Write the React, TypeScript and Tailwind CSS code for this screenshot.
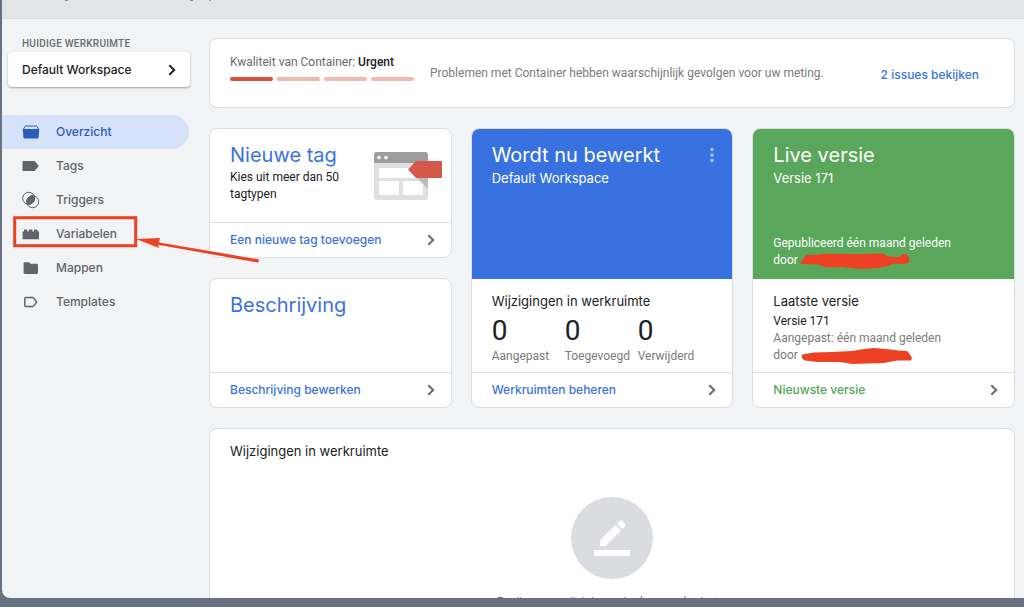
import type { ReactNode } from "react";

const display = "font-['Inter',sans-serif]";

function Chevron({ className = "text-[#6b6b6b]" }: { className?: string }) {
  return (
    <svg viewBox="0 0 8 12" className={`h-3 w-2 shrink-0 ${className}`} fill="none" stroke="currentColor" strokeWidth="2" aria-hidden="true">
      <path d="M1.3 1.2 6.2 6 1.3 10.8" />
    </svg>
  );
}

const icons: Record<string, ReactNode> = {
  overview: (
    <svg viewBox="0 0 18 14" className="h-3.5 w-[18px]" aria-hidden="true">
      <path d="M1.6 4 3 1.4Q3.3 1 3.8 1H14.2Q14.7 1 15 1.4L16.4 4" fill="none" stroke="currentColor" strokeWidth="1" />
      <path d="M1.2 4H16.8Q17.3 4 17.2 4.6L16.6 12.2Q16.5 13.5 15.4 13.5H2.6Q1.5 13.5 1.4 12.2L.8 4.6Q.7 4 1.2 4Z" fill="currentColor" />
    </svg>
  ),
  tag: (
    <svg viewBox="0 0 18 14" className="h-3.5 w-[18px]" aria-hidden="true">
      <path d="M1.5 2H12Q12.7 2 13.1 2.5L16.8 7 13.1 11.5Q12.7 12 12 12H1.5Q.5 12 .5 11V3Q.5 2 1.5 2Z" fill="currentColor" />
    </svg>
  ),
  trigger: (
    <svg viewBox="0 0 18 18" className="h-[18px] w-[18px]" fill="none" stroke="currentColor" strokeWidth="1" aria-hidden="true">
      <circle cx="6.7" cy="7.3" r="6" />
      <circle cx="10.7" cy="10.7" r="6" />
      <path d="M12.2 4.9A6 6 0 0 1 5.2 13.1 6 6 0 0 1 12.2 4.9Z" fill="currentColor" />
    </svg>
  ),
  variable: (
    <svg viewBox="0 0 18 14" className="h-3.5 w-[18px]" aria-hidden="true">
      <path d="M.6 12.3V4.6H2V3.3Q2 2.5 2.8 2.5H4.4Q5.2 2.5 5.2 3.3V4.6H6.7V3.3Q6.7 2.5 7.5 2.5H9.6Q10.4 2.5 10.4 3.3V4.6H12V3.3Q12 2.5 12.8 2.5H14.7Q15.5 2.5 15.5 3.3V4.6H17V12.3Z" fill="currentColor" />
    </svg>
  ),
  folder: (
    <svg viewBox="0 0 18 14" className="h-3.5 w-[18px]" aria-hidden="true">
      <path d="M3 1.2H7L8.6 2.8H14.6Q16 2.8 16 4.2V11.6Q16 13 14.6 13H3Q1.6 13 1.6 11.6V2.6Q1.6 1.2 3 1.2Z" fill="currentColor" />
    </svg>
  ),
  template: (
    <svg viewBox="0 0 18 14" className="h-3.5 w-[18px]" fill="none" stroke="currentColor" strokeWidth="1.5" strokeLinejoin="round" aria-hidden="true">
      <path d="M3.6 2.6H10.8Q11.4 2.6 11.8 3.1L14.6 7 11.8 10.9Q11.4 11.4 10.8 11.4H3.6Q2.8 11.4 2.8 10.6V3.4Q2.8 2.6 3.6 2.6Z" />
    </svg>
  ),
};

const navItems = [
  { icon: "overview", label: "Overzicht", active: true },
  { icon: "tag", label: "Tags" },
  { icon: "trigger", label: "Triggers" },
  { icon: "variable", label: "Variabelen", marked: true },
  { icon: "folder", label: "Mappen" },
  { icon: "template", label: "Templates" },
];

function Annotation() {
  return (
    <svg viewBox="0 0 250 50" className="pointer-events-none absolute -top-px left-2.5 z-10 h-[50px] w-[250px]" aria-hidden="true">
      <rect x="2.7" y="1.700" width="121" height="28" fill="none" stroke="#ee4023" strokeWidth="3" />
      <path d="M124 23 148 22 147 26.500 246.500 43.300Q247.500 45.500 246 46.500L146 28.800 147 32Z" fill="#ee4023" />
    </svg>
  );
}

function Sidebar() {
  return (
    <aside className="w-[207px] shrink-0 pt-[17px]">
      <p className="pl-5 text-[10px] leading-4 font-medium tracking-wide text-[#6a6d71]">HUIDIGE WERKRUIMTE</p>
      <button className={`ml-1.5 flex h-[35px] w-[182px] items-center justify-between rounded bg-white pr-3.5 pl-3.5 text-xs font-medium text-[#202124] shadow-[0_1px_2px_rgba(0,0,0,0.35)] ${display}`}>
        Default Workspace
        <Chevron className="text-[#202124]" />
      </button>
      <nav className="mt-7">
        <ul>
          {navItems.map((item) => (
            <li key={item.label} className="relative">
              <a
                href="#"
                className={`flex h-[34px] w-[187px] items-center rounded-r-full pl-5 text-xs font-medium ${display} ${item.active ? "bg-[#d6e2fa] text-[#2b5bbd]" : "text-[#606368]"}`}
              >
                <span className="flex w-[34px] items-center">{icons[item.icon]}</span>
                {item.label}
              </a>
              {item.marked && <Annotation />}
            </li>
          ))}
        </ul>
      </nav>
    </aside>
  );
}

function Card({ children, className = "" }: { children: ReactNode; className?: string }) {
  return <section className={`flex flex-col overflow-hidden rounded-lg border border-[#dadde2] bg-white ${className}`}>{children}</section>;
}

function CardLink({ children, green = false }: { children: ReactNode; green?: boolean }) {
  return (
    <a href="#" className={`flex h-[35px] shrink-0 items-center justify-between border-t border-[#dadde2] pr-4 pl-5 text-xs font-medium ${display} ${green ? "text-[#55a558]" : "text-[#3b73e0]"}`}>
      {children}
      <Chevron />
    </a>
  );
}

function TagArt() {
  return (
    <svg viewBox="0 0 70 50" className="mt-[22px] h-[50px] w-[70px] shrink-0" aria-hidden="true">
      <rect x="1" y="1" width="54" height="48" rx="3" fill="#dfdfdf" />
      <path d="M4 1H52Q55 1 55 4V12H1V4Q1 1 4 1Z" fill="#9c9c9c" />
      <circle cx="6" cy="6.6" r="1.8" fill="#fff" />
      <circle cx="13" cy="6.6" r="1.8" fill="#fff" />
      <path d="M6 17H50V27H6ZM6 30H26V44H6ZM30 30H50V44H30Z" fill="#fff" />
      <path d="M39 22 55 38V26Z" fill="#bcbcbc" />
      <path d="M35 18.5 42.5 10.5Q43 10 44 10H68Q69 10 69 11V26Q69 27 68 27H44Q43 27 42.5 26.5Z" fill="#d6584a" />
    </svg>
  );
}

function Stat({ label }: { label: string }) {
  return (
    <div className="w-[73px] whitespace-nowrap">
      <p className="text-[28px] leading-8 text-[#202124]">0</p>
      <p className="text-xs leading-[18px] text-[#7b7b7b]">{label}</p>
    </div>
  );
}

function Quality() {
  return (
    <Card className="shrink-0">
      <div className="flex items-center py-3.5 pr-[35px] pl-5">
        <div className="w-[184px] shrink-0 pb-3">
          <p className="text-xs leading-[18px] whitespace-nowrap text-[#6a6a6a]">
            Kwaliteit van Container: <span className="font-medium text-[#202124]">Urgent</span>
          </p>
          <div className="mt-1.5 grid grid-cols-4 gap-1">
            <span className="h-1 rounded-full bg-[#da4f3f]" />
            <span className="h-1 rounded-full bg-[#f0b8af]" />
            <span className="h-1 rounded-full bg-[#f0b8af]" />
            <span className="h-1 rounded-full bg-[#f0b8af]" />
          </div>
        </div>
        <p className="ml-4 flex-1 text-xs leading-[18px] text-[#7b7b7b]">Problemen met Container hebben waarschijnlijk gevolgen voor uw meting.</p>
        <a href="#" className={`pt-1 text-xs font-medium whitespace-nowrap text-[#3b73e0] ${display}`}>2 issues bekijken</a>
      </div>
    </Card>
  );
}

export default function App() {
  return (
    <div className="h-screen overflow-hidden bg-[#687180] pb-[9px] pl-0.5 font-['Roboto',sans-serif]">
      <div className="flex h-full flex-col overflow-hidden rounded-bl-lg bg-[#f1f3f4]">
        <header className="h-[19px] shrink-0 border-b border-[#dadcde] bg-[#e3e4e5]">
          <svg viewBox="0 0 220 2" className="h-0.5 w-[220px]" aria-hidden="true">
            <path d="M63 .5H66M188 .5H191M207.500 .5H209" stroke="#8b8d90" />
          </svg>
        </header>
        <div className="flex min-h-0 flex-1">
          <Sidebar />
          <main className="flex min-w-0 flex-1 flex-col gap-5 pt-[19px] pr-[9px]">
            <Quality />
            <div className="grid shrink-0 grid-cols-[243fr_263fr_263fr] gap-[19px]">
              <div className="flex flex-col gap-5">
                <Card className="h-[130px]">
                  <div className="flex flex-1 justify-between pr-2 pl-5">
                    <div className="pt-3">
                      <h2 className={`text-xl leading-7 whitespace-nowrap text-[#3b73e0] ${display}`}>Nieuwe tag</h2>
                      <p className="w-[120px] text-xs leading-[17px] text-[#202124]">Kies uit meer dan 50 tagtypen</p>
                    </div>
                    <TagArt />
                  </div>
                  <CardLink>Een nieuwe tag toevoegen</CardLink>
                </Card>
                <Card className="h-[130px]">
                  <h2 className={`flex-1 pt-3 pl-5 text-xl leading-7 text-[#3b73e0] ${display}`}>Beschrijving</h2>
                  <CardLink>Beschrijving bewerken</CardLink>
                </Card>
              </div>
              <Card>
                <div className={`flex h-[150px] items-start justify-between bg-[#3872e0] pt-3 pr-4 pl-5 text-white ${display}`}>
                  <div>
                    <h2 className="text-xl leading-7">Wordt nu bewerkt</h2>
                    <p className="text-[13px] leading-[18px]">Default Workspace</p>
                  </div>
                  <button aria-label="Meer opties" className="mt-1.5">
                    <svg viewBox="0 0 8 16" className="h-4 w-2" fill="#a9c3f3" aria-hidden="true">
                      <circle cx="4" cy="2.500" r="1.8" />
                      <circle cx="4" cy="8" r="1.8" />
                      <circle cx="4" cy="13.500" r="1.8" />
                    </svg>
                  </button>
                </div>
                <div className="flex-1 pt-3 pl-5">
                  <h3 className={`text-[13px] leading-5 text-[#202124] ${display}`}>Wijzigingen in werkruimte</h3>
                  <div className="mt-1 flex">
                    <Stat label="Aangepast" />
                    <Stat label="Toegevoegd" />
                    <Stat label="Verwijderd" />
                  </div>
                </div>
                <CardLink>Werkruimten beheren</CardLink>
              </Card>
              <Card>
                <div className="flex h-[150px] flex-col bg-[#5aa75c] pt-3 pb-2.5 pl-5 text-white">
                  <h2 className={`text-xl leading-7 ${display}`}>Live versie</h2>
                  <p className={`text-[13px] leading-[18px] ${display}`}>Versie 171</p>
                  <div className="mt-auto text-xs leading-[17px]">
                    <p>Gepubliceerd één maand geleden</p>
                    <p className="flex items-center">
                      door
                      <svg viewBox="0 0 110 16" className="ml-0.5 h-4 w-[110px]" fill="#ee4023" aria-hidden="true">
                        <path d="M0 10 3 6 6 2 20 1.5 24 .8 60 1 83 .5 88 3.500 99 4 103 1 107 1.200 109.500 6 109 9.500 105 11 94 10.500 88 13 78 15 60 16 42 14 26 14.500 18 11.500 2 11Z" />
                      </svg>
                    </p>
                  </div>
                </div>
                <div className="flex-1 pt-3 pl-5">
                  <h3 className={`text-[13px] leading-5 text-[#202124] ${display}`}>Laatste versie</h3>
                  <div className="mt-0.5 text-xs leading-[17px] text-[#7b7b7b]">
                    <p className="text-[#202124]">Versie 171</p>
                    <p>Aangepast: één maand geleden</p>
                    <p className="flex items-center">
                      door
                      <svg viewBox="0 0 110 16" className="ml-1 h-4 w-[110px]" fill="#ee4023" aria-hidden="true">
                        <path d="M0 6.500 12 4.500 30 4 50 3 62 1 72 0 84 1 96 2.500 105 3 107 5 110 10 109 12.500 95 12.500 82 15 50 16 38 14 15 14 3 12.500 0 10.500Z" />
                      </svg>
                    </p>
                  </div>
                </div>
                <CardLink green>Nieuwste versie</CardLink>
              </Card>
            </div>
            <Card className="h-60 shrink-0">
              <h3 className={`pt-3 pl-5 text-[13px] leading-5 text-[#202124] ${display}`}>Wijzigingen in werkruimte</h3>
              <div className="mt-9 flex flex-col items-center">
                <svg viewBox="0 0 82 82" className="h-[82px] w-[82px]" aria-hidden="true">
                  <circle cx="41" cy="41" r="41" fill="#dadce0" />
                  <path d="M23 53H59V59H23ZM29 43.300 44.500 28 50 33.500 34.500 49H29ZM46 26.500 48.800 23.700Q50 22.700 51.200 23.700L54.300 26.800Q55.300 28 54.300 29.200L51.500 32Z" fill="#fff" />
                </svg>
                <p className="mt-3.5 text-xs leading-[18px] text-[#7b7b7b]">Er zijn geen wijzigingen in deze werkruimte.</p>
              </div>
            </Card>
          </main>
        </div>
      </div>
    </div>
  );
}
